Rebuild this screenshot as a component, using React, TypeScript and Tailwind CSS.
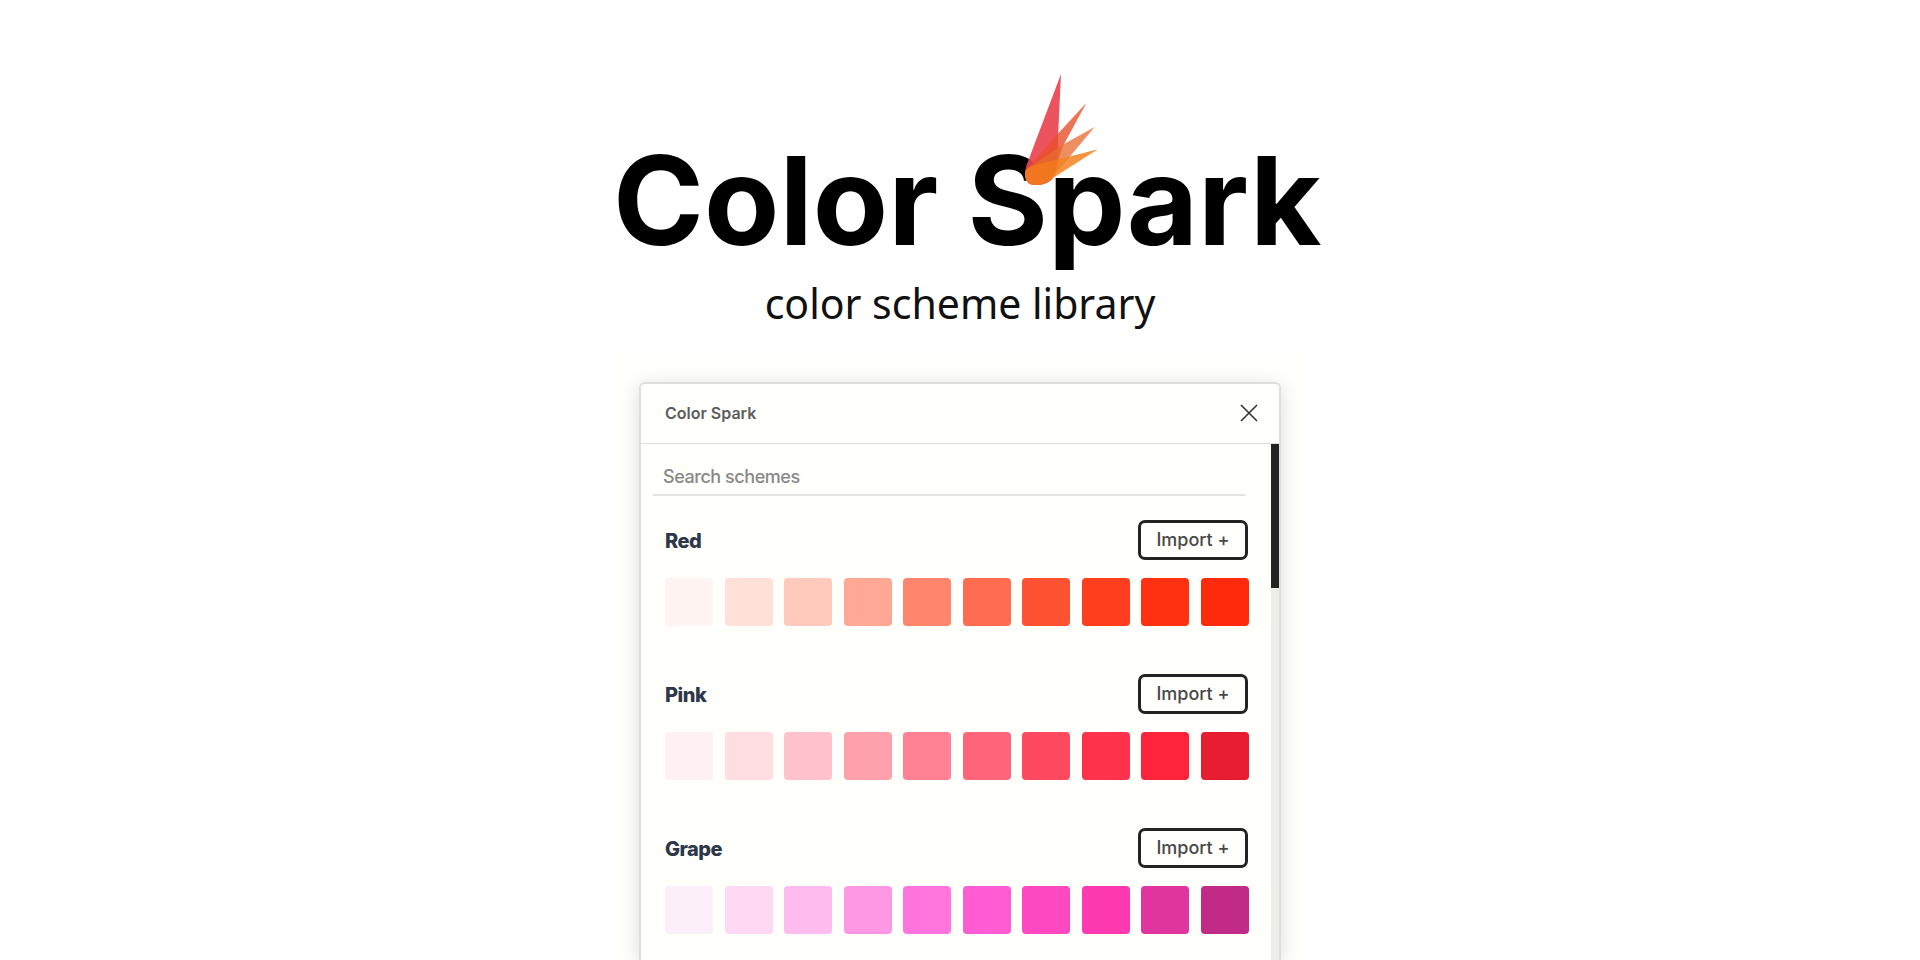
import React from "react";

type Scheme = { name: string; colors: string[] };

const schemes: Scheme[] = [
  {
    name: "Red",
    colors: ["bg-[#fff4f1]", "bg-[#ffe1da]", "bg-[#ffc9bc]", "bg-[#ffa895]", "bg-[#ff866d]", "bg-[#ff6d50]", "bg-[#ff5232]", "bg-[#ff3e1d]", "bg-[#ff3110]", "bg-[#ff290b]"],
  },
  {
    name: "Pink",
    colors: ["bg-[#fff0f1]", "bg-[#ffdde1]", "bg-[#ffc1ca]", "bg-[#ffa1ad]", "bg-[#ff8194]", "bg-[#ff657a]", "bg-[#ff4961]", "bg-[#ff324b]", "bg-[#ff243c]", "bg-[#e91d31]"],
  },
  {
    name: "Grape",
    colors: ["bg-[#fceffa]", "bg-[#ffd8f4]", "bg-[#ffbcef]", "bg-[#ff98e4]", "bg-[#ff75dc]", "bg-[#ff5bd3]", "bg-[#ff49c3]", "bg-[#ff3ab0]", "bg-[#e0349f]", "bg-[#c12b87]"],
  },
];

function Spark() {
  return (
    <svg viewBox="0 0 225 340" className="absolute left-[412px] top-[-36px] w-[75px]" aria-hidden="true">
      <path d="M108 0 L4 275 Q-1 295 0 305 Q3 334 33 333 Q70 333 92 303 Q98 262 100 170 Z" fill="#ec4450" fillOpacity="0.92" />
      <path d="M184 87 L100 178 L4 287 Q-2 333 33 333 Q65 333 82 316 L112 220 Z" fill="#e9502c" fillOpacity="0.8" />
      <path d="M209 159 L110 214 L2 288 Q-2 333 33 333 Q60 333 78 315 Z" fill="#e86a2c" fillOpacity="0.75" />
      <path d="M219 226 L30 274 Q0 282 0 303 Q2 333 33 333 Q50 333 66 323 Z" fill="#f58220" fillOpacity="0.85" />
      <path d="M100 258 L30 274 Q0 282 0 303 Q2 333 33 333 Q50 333 66 323 Q90 300 100 258 Z" fill="#f0741e" fillOpacity="0.85" />
    </svg>
  );
}

function SchemeSection({ name, colors }: Scheme) {
  return (
    <section className="flex flex-col gap-[18px]">
      <div className="flex h-10 items-center justify-between pr-px">
        <h2 className="pt-[2px] text-[20px] font-extrabold leading-6 tracking-tight text-[#2d374a]">{name}</h2>
        <button type="button" className="h-10 w-[110px] rounded-[7px] border-[3px] border-[#232323] text-[18px] font-medium leading-6 text-[#484848]">
          Import +
        </button>
      </div>
      <ul className="flex justify-between">
        {colors.map((color) => (
          <li key={color} className={`size-12 rounded-[4px] ${color}`} />
        ))}
      </ul>
    </section>
  );
}

export default function App() {
  return (
    <main className="flex min-h-screen flex-col items-center bg-white font-['Inter',sans-serif]">
      <header className="flex w-full max-w-[694px] flex-col items-center pt-[110px]">
        <h1 className="relative self-start whitespace-nowrap text-[123px] font-bold leading-[182px] text-black">
          Color Spark
          <Spark />
        </h1>
        <p className="mt-[-19px] pb-5 font-['Noto_Sans',sans-serif] text-[41px] leading-[60px] text-[#111]">color scheme library</p>
      </header>

      <div className="flex w-full max-w-[686px] grow flex-col overflow-hidden bg-[#fffffb] px-[22px] pt-[29px]">
        <div className="flex grow flex-col rounded-t-[6px] border-2 border-b-0 border-[#dfdfdb] shadow-[0_4px_20px_rgba(0,0,0,0.15)]">
          <div className="flex h-[60px] items-center justify-between border-b border-[#dfdfdb] pb-[2px] pl-6 pr-[21px]">
            <span className="text-[16px] font-semibold leading-6 text-[#5c5c5c]">Color Spark</span>
            <button type="button" aria-label="Close">
              <svg viewBox="0 0 18 18" className="size-[18px]" fill="none" stroke="#333" strokeWidth="1.6">
                <path d="M1 1 L17 17 M17 1 L1 17" />
              </svg>
            </button>
          </div>
          <div className="flex grow">
            <div className="grow pb-[26px] pl-3 pr-[22px] pt-3">
              <div className="pr-1">
                <input
                  type="text"
                  aria-label="Search schemes"
                  placeholder="Search schemes"
                  className="block h-10 w-full border-b-2 border-[#e2e2df] px-[10px] pt-[2px] text-[18px] font-medium tracking-tight outline-none placeholder:text-[#888]"
                />
              </div>
              <div className="flex flex-col gap-12 pl-3 pt-6">
                {schemes.map((scheme) => (
                  <SchemeSection key={scheme.name} {...scheme} />
                ))}
              </div>
            </div>
            <div className="w-2 bg-[#ededea]">
              <div className="h-[144px] bg-[#222]" />
            </div>
          </div>
        </div>
      </div>
    </main>
  );
}
